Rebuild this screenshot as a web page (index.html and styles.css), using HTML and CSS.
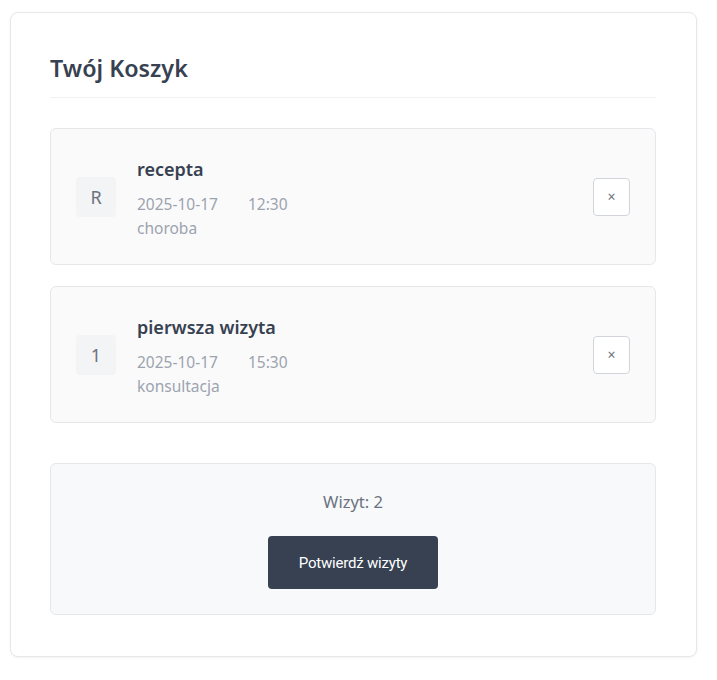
FILE: index.html
```html
<!DOCTYPE html>
<html lang="pl">
<head>
<meta charset="utf-8">
<title>Twój Koszyk</title>
<link rel="stylesheet" href="styles.css">
</head>
<body>
<div class="card">
  <h1 class="title">Twój Koszyk</h1>
  <div class="items">
    <div class="item">
      <div class="avatar">R</div>
      <div class="info">
        <div class="name">recepta</div>
        <div class="meta"><span>2025-10-17</span><span>12:30</span></div>
        <div class="desc">choroba</div>
      </div>
      <button class="remove" type="button">×</button>
    </div>
    <div class="item">
      <div class="avatar">1</div>
      <div class="info">
        <div class="name">pierwsza wizyta</div>
        <div class="meta"><span>2025-10-17</span><span>15:30</span></div>
        <div class="desc">konsultacja</div>
      </div>
      <button class="remove" type="button">×</button>
    </div>
  </div>
  <div class="summary">
    <div class="count">Wizyt: 2</div>
    <button class="confirm" type="button">Potwierdź wizyty</button>
  </div>
</div>
</body>
</html>
```

FILE: styles.css
```css
* { box-sizing: border-box; }
body {
  margin: 0;
  padding: 12px 20px 20px 10px;
  background: #ffffff;
  font-family: "Noto Sans", "Open Sans", sans-serif;
  color: #374151;
}
.card {
  width: 687px;
  height: 645px;
  border: 1px solid #e5e7eb;
  border-radius: 8px;
  background: #fff;
  box-shadow: 0 1px 3px rgba(0,0,0,0.05);
  padding: 39px 40px 40px 39px;
}
.title {
  margin: 0;
  font-size: 23.3px;
  font-weight: 600;
  line-height: 32px;
  color: #374151;
  padding-bottom: 13px;
  border-bottom: 1px solid #f0f1f3;
}
.items {
  margin-top: 30px;
  display: flex;
  flex-direction: column;
  gap: 21px;
}
.item {
  display: flex;
  align-items: center;
  height: 137px;
  background: #fafafa;
  border: 1px solid #e5e7eb;
  border-radius: 6px;
  padding: 0 25px 0 25px;
}
.avatar {
  width: 40px;
  height: 40px;
  flex: none;
  background: #f3f4f6;
  border-radius: 4px;
  display: flex;
  align-items: center;
  justify-content: center;
  font-size: 18px;
  color: #6b7280;
}
.info {
  flex: 1;
  margin-left: 21px;
  margin-top: 3px;
}
.name {
  font-size: 18px;
  font-weight: 600;
  line-height: 27px;
  color: #374151;
}
.meta {
  margin-top: 10px;
  display: flex;
  gap: 30px;
  font-size: 15.5px;
  line-height: 22px;
  color: #9ca3af;
}
.desc {
  margin-top: 1px;
  font-size: 15.5px;
  line-height: 24px;
  color: #9ca3af;
}
.remove {
  width: 37px;
  height: 38px;
  flex: none;
  background: #fff;
  border: 1px solid #d1d5db;
  border-radius: 4px;
  color: #6b7280;
  font-size: 14px;
  font-family: inherit;
  padding: 0;
  display: flex;
  align-items: center;
  justify-content: center;
}
.summary {
  margin-top: 40px;
  height: 152px;
  background: #f8f9fa;
  border: 1px solid #e5e7eb;
  border-radius: 6px;
  display: flex;
  flex-direction: column;
  align-items: center;
  padding-top: 26px;
}
.count {
  font-size: 16.5px;
  line-height: 24px;
  color: #6b7280;
}
.confirm {
  margin-top: 22px;
  width: 170px;
  height: 53px;
  background: #374151;
  color: #fff;
  border: none;
  border-radius: 4px;
  font-family: "Roboto", sans-serif;
  font-size: 15px;
  letter-spacing: -0.2px;
}
```
